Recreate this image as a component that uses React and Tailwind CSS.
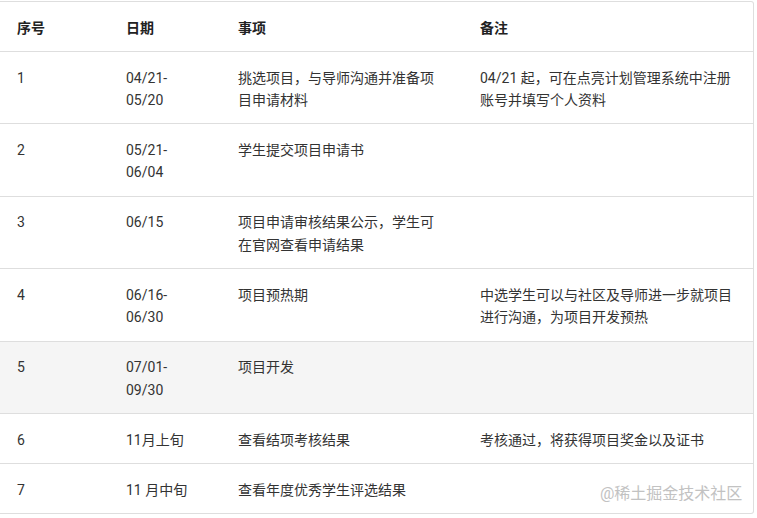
import React from "react";

const rows = [
  { n: "1", d: ["04/21-", "05/20"], t: ["挑选项目，与导师沟通并准备项", "目申请材料"], r: ["04/21 起，可在点亮计划管理系统中注册", "账号并填写个人资料"] },
  { n: "2", d: ["05/21-", "06/04"], t: ["学生提交项目申请书"], r: [] },
  { n: "3", d: ["06/15"], t: ["项目申请审核结果公示，学生可", "在官网查看申请结果"], r: [] },
  { n: "4", d: ["06/16-", "06/30"], t: ["项目预热期"], r: ["中选学生可以与社区及导师进一步就项目", "进行沟通，为项目开发预热"] },
  { n: "5", d: ["07/01-", "09/30"], t: ["项目开发"], r: [], hl: true },
  { n: "6", d: ["11月上旬"], t: ["查看结项考核结果"], r: ["考核通过，将获得项目奖金以及证书"] },
  { n: "7", d: ["11 月中旬"], t: ["查看年度优秀学生评选结果"], r: [] },
];

function Lines({ lines }) {
  return lines.map((l, i) => (
    <React.Fragment key={i}>
      {i > 0 && <br />}
      {l}
    </React.Fragment>
  ));
}

export default function App() {
  const cell = "align-top pt-[14.6px] pb-[12px] pr-[16px] leading-[22.4px]";
  return (
    <div
      className="relative w-[757px] h-[518px] bg-white overflow-hidden text-[14px] text-[#333]"
      style={{ fontFamily: 'Roboto, "Noto Sans CJK SC", sans-serif' }}
    >
      <div className="mt-px w-[754px] border-t border-r border-b border-[#dedede] rounded-tr-[3px] rounded-br-[3px] overflow-hidden">
        <table className="w-[753px] table-fixed border-collapse">
          <colgroup>
            <col className="w-[110px]" />
            <col className="w-[112px]" />
            <col className="w-[242px]" />
            <col className="w-[289px]" />
          </colgroup>
          <thead>
            <tr className="text-left font-semibold text-[#222]">
              <th className={`${cell} pl-[17px] font-semibold`}>序号</th>
              <th className={`${cell} pl-[16px] font-semibold`}>日期</th>
              <th className={`${cell} pl-[16px] font-semibold`}>事项</th>
              <th className={`${cell} pl-[16px] font-semibold`}>备注</th>
            </tr>
          </thead>
          <tbody>
            {rows.map((r) => (
              <tr key={r.n} className={`border-t border-[#dedede] ${r.hl ? "bg-[#f5f5f5]" : ""}`}>
                <td className={`${cell} pl-[17px]`}>{r.n}</td>
                <td className={`${cell} pl-[16px]`}><Lines lines={r.d} /></td>
                <td className={`${cell} pl-[16px]`}><Lines lines={r.t} /></td>
                <td className={`${cell} pl-[16px]`}><Lines lines={r.r} /></td>
              </tr>
            ))}
          </tbody>
        </table>
      </div>
      <div className="absolute left-[600px] top-[483px] text-[16px] leading-[22px] text-[#c2c2c2] whitespace-nowrap">
        @稀土掘金技术社区
      </div>
    </div>
  );
}
